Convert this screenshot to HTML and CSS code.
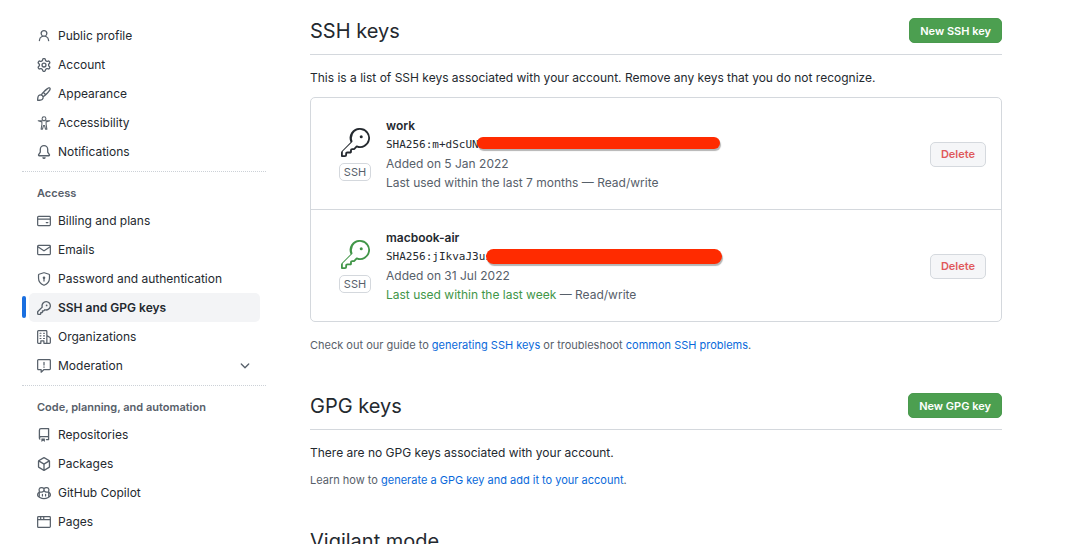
FILE: index.html
```html
<!DOCTYPE html>
<html lang="en">
<head>
<meta charset="utf-8">
<title>SSH and GPG keys</title>
<link rel="stylesheet" href="styles.css">
</head>
<body>
<svg class="sprite" aria-hidden="true">
  <symbol id="i-key" viewBox="0 0 16 16"><path d="M10.5 0a5.499 5.499 0 1 1-1.288 10.848l-.932.932a.749.749 0 0 1-.53.22H7v.75a.749.749 0 0 1-.22.53l-.5.5a.749.749 0 0 1-.53.22H5v.75a.749.749 0 0 1-.22.53l-.5.5a.749.749 0 0 1-.53.22h-2A1.75 1.75 0 0 1 0 14.25v-2c0-.199.079-.389.22-.53l4.932-4.932A5.5 5.5 0 0 1 10.5 0Zm-4 5.5c-.001.431.069.86.205 1.269a.75.75 0 0 1-.181.768L1.5 12.56v1.69c0 .138.112.25.25.25h1.69l.06-.06v-1.19a.75.75 0 0 1 .75-.75h1.19l.06-.06v-1.19a.75.75 0 0 1 .75-.75h1.19l1.023-1.025a.75.75 0 0 1 .768-.18A4 4 0 1 0 6.5 5.5ZM11 6a1 1 0 1 1 0-2 1 1 0 0 1 0 2Z"/></symbol>
  <symbol id="i-key-large" viewBox="0 0 24 24"><path d="M16.75 8.5a1.25 1.25 0 1 0 0-2.5 1.25 1.25 0 0 0 0 2.5Z"/><path d="M15.75 0a8.25 8.25 0 1 1-2.541 16.101l-1.636 1.636a1.744 1.744 0 0 1-1.237.513H9.25a.25.25 0 0 0-.25.25v1.448a.876.876 0 0 1-.256.619l-.214.213a.75.75 0 0 1-.545.22H5.25a.25.25 0 0 0-.25.25v1A1.75 1.75 0 0 1 3.25 24h-2.5A.75.75 0 0 1 0 23.25v-2.836c0-.464.185-.908.513-1.236l7.386-7.388A8.249 8.249 0 0 1 15.75 0ZM9 8.25a6.733 6.733 0 0 0 .463 2.462.75.75 0 0 1-.168.804l-7.722 7.721a.25.25 0 0 0-.073.177V22.5h1.75a.25.25 0 0 0 .25-.25v-1c0-.966.784-1.75 1.75-1.75H7.5v-1c0-.966.784-1.75 1.75-1.75h1.086a.25.25 0 0 0 .177-.073l1.971-1.972a.75.75 0 0 1 .804-.168A6.75 6.75 0 1 0 9 8.25Z"/></symbol>
</svg>
<div class="page">
  <nav class="sidebar" aria-label="Settings">
    <ul class="nav-list">
      <li><a class="nav-item" href="#"><svg class="icon" viewBox="0 0 16 16"><path d="M10.561 8.073a6.005 6.005 0 0 1 3.432 5.142.75.75 0 1 1-1.498.07 4.5 4.5 0 0 0-8.99 0 .75.75 0 0 1-1.498-.07 6.004 6.004 0 0 1 3.431-5.142 3.999 3.999 0 1 1 5.123 0ZM10.5 5a2.5 2.5 0 1 0-5 0 2.5 2.5 0 0 0 5 0Z"/></svg>Public profile</a></li>
      <li><a class="nav-item" href="#"><svg class="icon" viewBox="0 0 16 16"><path d="M8 0a8.2 8.2 0 0 1 .701.031C9.444.095 9.99.645 10.16 1.29l.288 1.107c.018.066.079.158.212.224.231.114.454.243.668.386.123.082.233.09.299.071l1.103-.303c.644-.176 1.392.021 1.82.63.27.385.506.792.704 1.218.315.675.111 1.422-.364 1.891l-.814.806c-.049.048-.098.147-.088.294.016.257.016.515 0 .772-.01.147.038.246.088.294l.814.806c.475.469.679 1.216.364 1.891a7.977 7.977 0 0 1-.704 1.217c-.428.61-1.176.807-1.82.63l-1.102-.302c-.067-.019-.177-.011-.3.071a5.909 5.909 0 0 1-.668.386c-.133.066-.194.158-.211.224l-.29 1.106c-.168.646-.715 1.196-1.458 1.26a8.006 8.006 0 0 1-1.402 0c-.743-.064-1.289-.614-1.458-1.26l-.289-1.106c-.018-.066-.079-.158-.212-.224a5.738 5.738 0 0 1-.668-.386c-.123-.082-.233-.09-.299-.071l-1.103.303c-.644.176-1.392-.021-1.82-.63a8.12 8.12 0 0 1-.704-1.218c-.315-.675-.111-1.422.363-1.891l.815-.806c.05-.048.098-.147.088-.294a6.214 6.214 0 0 1 0-.772c.01-.147-.038-.246-.088-.294l-.815-.806C.635 6.045.431 5.298.746 4.623a7.92 7.92 0 0 1 .704-1.217c.428-.61 1.176-.807 1.82-.63l1.102.302c.067.019.177.011.3-.071.214-.143.437-.272.668-.386.133-.066.194-.158.211-.224l.29-1.106C6.009.645 6.556.095 7.299.03 7.53.01 7.764 0 8 0Zm-.571 1.525c-.036.003-.108.036-.137.146l-.289 1.105c-.147.561-.549.967-.998 1.189-.173.086-.34.183-.5.29-.417.278-.97.423-1.529.27l-1.103-.303c-.109-.03-.175.016-.195.045-.22.312-.412.644-.573.99-.014.031-.021.11.059.19l.815.806c.411.406.562.957.53 1.456a4.709 4.709 0 0 0 0 .582c.032.499-.119 1.05-.53 1.456l-.815.806c-.081.08-.073.159-.059.19.162.346.353.677.573.989.02.03.085.076.195.046l1.102-.303c.56-.153 1.113-.008 1.53.27.161.107.328.204.501.29.447.222.85.629.997 1.189l.289 1.105c.029.109.101.143.137.146a6.6 6.6 0 0 0 1.142 0c.036-.003.108-.036.137-.146l.289-1.105c.147-.561.549-.967.998-1.189.173-.086.34-.183.5-.29.417-.278.97-.423 1.529-.27l1.103.303c.109.029.175-.016.195-.045.22-.313.411-.644.573-.99.014-.031.021-.11-.059-.19l-.815-.806c-.411-.406-.562-.957-.53-1.456a4.709 4.709 0 0 0 0-.582c-.032-.499.119-1.05.53-1.456l.815-.806c.081-.08.073-.159.059-.19a6.464 6.464 0 0 0-.573-.989c-.02-.03-.085-.076-.195-.046l-1.102.303c-.56.153-1.113.008-1.53-.27a4.44 4.44 0 0 0-.501-.29c-.447-.222-.85-.629-.997-1.189l-.289-1.105c-.029-.11-.101-.143-.137-.146a6.6 6.6 0 0 0-1.142 0ZM11 8a3 3 0 1 1-6 0 3 3 0 0 1 6 0ZM9.5 8a1.5 1.5 0 1 0-3.001.001A1.5 1.5 0 0 0 9.5 8Z"/></svg>Account</a></li>
      <li><a class="nav-item" href="#"><svg class="icon" viewBox="0 0 16 16"><path d="M11.134 1.535c.7-.509 1.416-.942 2.076-1.155.649-.21 1.463-.267 2.069.34.603.601.568 1.411.368 2.07-.202.668-.624 1.39-1.125 2.096-1.011 1.424-2.496 2.987-3.775 4.249-1.098 1.084-2.132 1.839-3.04 2.3a3.744 3.744 0 0 1-1.055 3.217c-.431.431-1.065.691-1.657.861-.614.177-1.294.287-1.914.357A21.151 21.151 0 0 1 .75 16 .75.75 0 0 1 0 15.25a21.25 21.25 0 0 1 .13-2.331c.067-.647.187-1.287.358-1.914.17-.591.43-1.226.86-1.657a3.746 3.746 0 0 1 3.227-1.054c.466-.893 1.225-1.907 2.314-2.982 1.271-1.255 2.833-2.75 4.246-3.777ZM1.62 13.089c-.051.464-.086.929-.104 1.395.466-.018.932-.053 1.396-.104a10.511 10.511 0 0 0 1.668-.309c.526-.151.856-.325 1.011-.48a2.25 2.25 0 1 0-3.182-3.182c-.155.155-.329.485-.48 1.01a10.515 10.515 0 0 0-.309 1.67Zm10.396-10.34c-1.224.89-2.605 2.189-3.822 3.384l1.718 1.718c1.21-1.205 2.51-2.597 3.387-3.833.47-.662.78-1.227.912-1.662.134-.444.032-.551.009-.575-.015-.014-.114-.113-.549.027-.432.14-.995.462-1.655.942Zm-4.832 7.266a9.859 9.859 0 0 0 1.63-1.142L7.155 7.216a9.7 9.7 0 0 0-1.161 1.607c.482.302.889.71 1.19 1.192Z"/></svg>Appearance</a></li>
      <li><a class="nav-item" href="#"><svg class="icon line thin" viewBox="0 0 16 16"><path d="M1.4 5.4h13.2M1.4 5.4l4.2 1.4v2.6L4.7 15h1.6l1-4h1.4l1 4h1.6l-.9-5.6V6.8l4.2-1.4"/><circle cx="8" cy="3" r="2.2"/></svg>Accessibility</a></li>
      <li><a class="nav-item" href="#"><svg class="icon" viewBox="0 0 16 16"><path d="M8 16a2 2 0 0 0 1.985-1.75c.017-.137-.097-.25-.235-.25h-3.5c-.138 0-.252.113-.235.25A2 2 0 0 0 8 16ZM3 5a5 5 0 0 1 10 0v2.947c0 .05.015.098.042.139l1.703 2.555A1.519 1.519 0 0 1 13.482 13H2.518a1.516 1.516 0 0 1-1.263-2.36l1.703-2.554A.255.255 0 0 0 3 7.947Zm5-3.5A3.5 3.5 0 0 0 4.5 5v2.947c0 .346-.102.683-.294.97l-1.703 2.556.015.027h10.964l.015-.027-1.703-2.554a1.745 1.745 0 0 1-.294-.97V5A3.5 3.5 0 0 0 8 1.5Z"/></svg>Notifications</a></li>
    </ul>
    <h3 class="nav-title">Access</h3>
    <ul class="nav-list">
      <li><a class="nav-item" href="#"><svg class="icon line" viewBox="0 0 16 16"><rect x=".75" y="2.75" width="14.5" height="10.5" rx="1"/><path d="M.75 5.8h14.5M10.6 9.8h1.8"/></svg>Billing and plans</a></li>
      <li><a class="nav-item" href="#"><svg class="icon line" viewBox="0 0 16 16"><rect x=".75" y="2.75" width="14.5" height="10.5" rx="1"/><path d="m1 4.3 6.4 4.4q.6.4 1.2 0L15 4.3"/></svg>Emails</a></li>
      <li><a class="nav-item" href="#"><svg class="icon line" viewBox="0 0 16 16"><path d="M7.7.9 2.3 2.6Q1.75 2.8 1.75 3.4V7c0 3.8 2.3 6.3 6.1 8.1h.3c3.8-1.8 6.1-4.3 6.1-8.1V3.4q0-.6-.55-.8L8.3.9Q8 .8 7.7.9Z"/><circle cx="8" cy="6.5" r=".8"/><path d="M8 7v3.4"/></svg>Password and authentication</a></li>
      <li><a class="nav-item nav-item-active" href="#" aria-current="page"><svg class="icon"><use href="#i-key"/></svg>SSH and GPG keys</a></li>
      <li><a class="nav-item" href="#"><svg class="icon line" viewBox="0 0 16 16"><path d="M4.4 15.25H1.75q-1 0-1-1V1.75q0-1 1-1h8.5q1 0 1 1v13.5H7.9v-2.8H4.4v2.8ZM11.25 6.4l3.2 1.9q.8.5.8 1.2v4.75q0 1-1 1h-3"/><path class="thin" d="M3.4 3.7h1.2M7.4 3.7h1.2M3.4 6.7h1.2M7.4 6.7h1.2M3.4 9.7h1.2M7.4 9.7h1.2"/></svg>Organizations</a></li>
      <li><a class="nav-item" href="#"><svg class="icon line" viewBox="0 0 16 16"><path d="M1.75.75h12.5q1 0 1 1v9.5q0 1-1 1H7.7L4.75 15.1v-2.85h-3q-1 0-1-1v-9.5q0-1 1-1ZM8 3.7v3.2M8 9v.5"/></svg>Moderation<svg class="icon icon-end" viewBox="0 0 16 16"><path d="M12.78 5.22a.749.749 0 0 1 0 1.06l-4.25 4.25a.749.749 0 0 1-1.06 0L3.22 6.28a.749.749 0 1 1 1.06-1.06L8 8.939l3.72-3.719a.749.749 0 0 1 1.06 0Z"/></svg></a></li>
    </ul>
    <h3 class="nav-title">Code, planning, and automation</h3>
    <ul class="nav-list">
      <li><a class="nav-item" href="#"><svg class="icon" viewBox="0 0 16 16"><path d="M2 2.5A2.5 2.5 0 0 1 4.5 0h8.75a.75.75 0 0 1 .75.75v12.5a.75.75 0 0 1-.75.75h-2.5a.75.75 0 0 1 0-1.5h1.75v-2h-8a1 1 0 0 0-.714 1.7.75.75 0 1 1-1.072 1.05A2.495 2.495 0 0 1 2 11.5Zm10.5-1h-8a1 1 0 0 0-1 1v6.708A2.486 2.486 0 0 1 4.5 9h8ZM5 12.25a.25.25 0 0 1 .25-.25h3.5a.25.25 0 0 1 .25.25v3.25a.25.25 0 0 1-.4.2l-1.45-1.087a.249.249 0 0 0-.3 0L5.4 15.7a.25.25 0 0 1-.4-.2Z"/></svg>Repositories</a></li>
      <li><a class="nav-item" href="#"><svg class="icon" viewBox="0 0 16 16"><path d="m8.878.392 5.25 3.045c.54.314.872.89.872 1.514v6.098a1.75 1.75 0 0 1-.872 1.514l-5.25 3.045a1.75 1.75 0 0 1-1.756 0l-5.25-3.045A1.75 1.75 0 0 1 1 11.049V4.951c0-.624.332-1.201.872-1.514L7.122.392a1.75 1.75 0 0 1 1.756 0ZM7.875 1.69l-4.63 2.685L8 7.133l4.755-2.758-4.63-2.685a.248.248 0 0 0-.25 0ZM2.5 5.677v5.372c0 .09.047.171.125.216l4.625 2.683V8.432Zm6.25 8.271 4.625-2.683a.25.25 0 0 0 .125-.216V5.677L8.75 8.432Z"/></svg>Packages</a></li>
      <li><a class="nav-item" href="#"><svg class="icon line" viewBox="0 0 16 16"><path d="M7.6 2.6C6.7 1.5 3.6 1.8 2.9 2.8c-.6.8-.5 2.6-.1 3.5.5 1 3.7 1 4.5-.1.6-.8 1-2.8.3-3.6ZM8.4 2.6c.9-1.1 4-.8 4.7.2.6.8.5 2.6.1 3.5-.5 1-3.7 1-4.5-.1-.6-.8-1-2.8-.3-3.6ZM2.6 6.2v6.1M13.4 6.2v6.1M2.4 7.1C1.2 8 .75 8.8.75 9.5v1.4c0 1.1 4 3.6 7.25 3.6s7.25-2.5 7.25-3.6V9.5c0-.7-.45-1.5-1.65-2.4M6.2 9.6v1.7M9.8 9.6v1.7"/></svg>GitHub Copilot</a></li>
      <li><a class="nav-item" href="#"><svg class="icon line" viewBox="0 0 16 16"><rect x=".75" y="1.75" width="14.5" height="12.5" rx="1"/><path d="M.75 5.3h14.5M4.2 2v3M7.7 2v3"/></svg>Pages</a></li>
    </ul>
  </nav>

  <main class="content">
    <section>
      <header class="section-head"><h2>SSH keys</h2><button class="btn btn-primary" type="button">New SSH key</button></header>
      <p class="intro">This is a list of SSH keys associated with your account. Remove any keys that you do not recognize.</p>
      <ul class="key-list">
        <li class="key-row">
          <div class="key-badge"><svg class="key-icon"><use href="#i-key-large"/></svg><span class="key-type">SSH</span></div>
          <div class="key-info">
            <strong>work</strong>
            <code class="fingerprint">SHA256:m+dScUN<span class="redaction"></span></code>
            <span>Added on 5 Jan 2022</span>
            <span>Last used within the last 7 months — Read/write</span>
          </div>
          <button class="btn btn-danger" type="button">Delete</button>
        </li>
        <li class="key-row">
          <div class="key-badge"><svg class="key-icon key-icon-recent"><use href="#i-key-large"/></svg><span class="key-type">SSH</span></div>
          <div class="key-info">
            <strong>macbook-air</strong>
            <code class="fingerprint">SHA256:jIkvaJ3us<span class="redaction redaction-thick"></span></code>
            <span>Added on 31 Jul 2022</span>
            <span><span class="recent">Last used within the last week</span> — Read/write</span>
          </div>
          <button class="btn btn-danger" type="button">Delete</button>
        </li>
      </ul>
      <p class="note">Check out our guide to <a href="#">generating SSH keys</a> or troubleshoot <a href="#">common SSH problems</a>.</p>
    </section>
    <section>
      <header class="section-head"><h2>GPG keys</h2><button class="btn btn-primary" type="button">New GPG key</button></header>
      <p class="intro">There are no GPG keys associated with your account.</p>
      <p class="note note-close">Learn how to <a href="#">generate a GPG key and add it to your account</a>.</p>
    </section>
    <section>
      <header class="section-head"><h2>Vigilant mode</h2></header>
    </section>
  </main>
</div>
</body>
</html>
```
FILE: styles.css
```css
* { box-sizing: border-box; }

html { overflow: hidden; }

body {
  margin: 0;
  height: 100vh;
  overflow: hidden;
  background: #fff;
  color: #24292f;
  font: 12px/19px Inter, "Liberation Sans", sans-serif;
}

h2, h3, p, ul { margin: 0; padding: 0; }
ul { list-style: none; }
a { color: #0969da; text-decoration: none; }

.sprite { position: absolute; width: 0; height: 0; }

.page {
  display: flex;
  gap: 44px;
  padding: 0 85px 0 22px;
}

/* Sidebar */
.sidebar { flex: 0 0 244px; padding-top: 21px; }
.nav-list { padding: 0 6px 5px 7px; }

.nav-item {
  position: relative;
  display: flex;
  align-items: center;
  gap: 7px;
  height: 29px;
  padding: 0 8px;
  border-radius: 5px;
  color: #24292f;
}

.nav-item-active { background: #f3f4f6; font-weight: 600; }
.nav-item-active::before {
  content: "";
  position: absolute;
  left: -7px;
  top: 3px;
  bottom: 4px;
  width: 4px;
  border-radius: 2px;
  background: #1a6fe0;
}

.icon { flex: none; width: 14px; height: 14px; fill: #57606a; }
.icon-end { margin-left: auto; }
.line { fill: none; stroke: #57606a; stroke-width: 1.4; stroke-linejoin: round; stroke-linecap: round; }
.thin { stroke-width: 1.2; }

.nav-title {
  height: 35px;
  padding: 12px 15px 0;
  border-top: 1px dotted #ccd1d7;
  color: #57606a;
  font-size: 11px;
  font-weight: 600;
}

/* Content */
.content { flex: 1; min-width: 0; padding-top: 14px; }

.section-head {
  display: flex;
  align-items: center;
  justify-content: space-between;
  height: 41px;
  padding-bottom: 7px;
  border-bottom: 1px solid #d4d8dd;
}
h2 { font-size: 20px; font-weight: 400; line-height: 32px; }

.btn {
  height: 25px;
  padding: 0 10px;
  border: 1px solid #d5d9de;
  border-radius: 5px;
  font: 600 11px/18px Inter, "Liberation Sans", sans-serif;
}
.btn-primary { border-color: #4a9a4e; background: #4c9f50; color: #fff; }
.btn-danger { background: #f5f6f8; color: #e0595b; }

.intro { margin-top: 13px; }

.key-list { margin-top: 10px; border: 1px solid #d4d8dd; border-radius: 5px; }
.key-row { display: flex; align-items: center; padding: 18px 15px 17px 28px; }
.key-row + .key-row { border-top: 1px solid #d4d8dd; }

.key-badge {
  display: flex;
  flex-direction: column;
  align-items: center;
  gap: 6px;
  width: 32px;
  margin-right: 15px;
}
.key-icon { width: 29px; height: 29px; fill: #24292f; }
.key-icon-recent { fill: #419648; }
.key-type {
  padding: 0 4px;
  border: 1px solid #d4d8dd;
  border-radius: 5px;
  color: #57606a;
  font-size: 11px;
  line-height: 16px;
}

.key-info { display: flex; flex: 1; flex-direction: column; align-items: flex-start; color: #57606a; }
.key-info strong { color: #24292f; font-weight: 600; }

.fingerprint {
  position: relative;
  color: #24292f;
  font: 11px/19px "DejaVu Sans Mono", "Liberation Mono", monospace;
}
.redaction {
  position: absolute;
  left: 91px;
  top: 2px;
  width: 243px;
  height: 12px;
  border-radius: 6px;
  background: #ff2b00;
  box-shadow: 1px 2px 1px #b4b4b4;
}
.redaction-thick { left: 100px; width: 236px; height: 15px; border-radius: 8px; }

.recent { color: #419648; }

.note { margin: 14px 0 34px; color: #57606a; font-size: 11px; }
.note-close { margin-top: 9px; }
```
